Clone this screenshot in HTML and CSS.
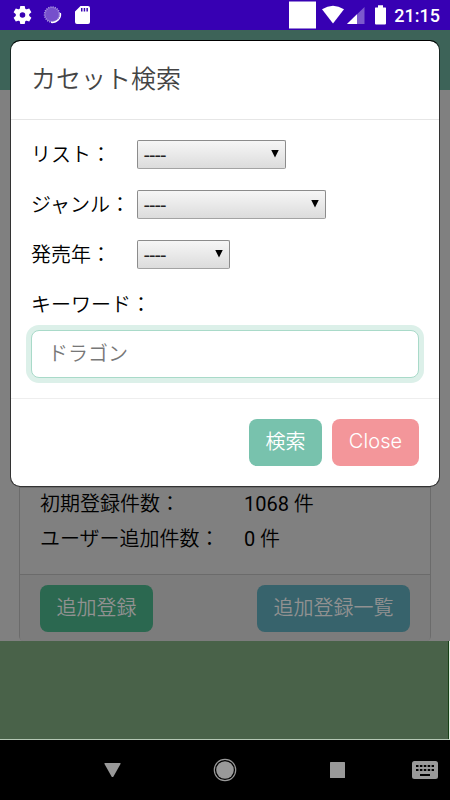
FILE: index.html
```html
<!DOCTYPE html>
<html lang="ja">
<head>
<meta charset="utf-8">
<title>カセット検索</title>
<link rel="stylesheet" href="styles.css">
</head>
<body>
<div class="screen">
  <header class="status">
    <svg class="status-icons" width="450" height="30" viewBox="0 0 450 30">
      <g fill="#fff">
        <circle cx="22.5" cy="15" r="4.8" fill="none" stroke="#fff" stroke-width="4"/>
        <path d="M20.3 6h4.4l.8 4h-6zM20.3 24h4.4l.8-4h-6zM13.6 12.2l2.2-3.8 4 1.4-3 5.2zM31.4 12.2l-2.2-3.8-4 1.4 3 5.2zM13.6 17.8l2.2 3.8 4-1.4-3-5.2zM31.4 17.8l-2.2 3.8-4-1.4 3-5.2z"/>
        <circle cx="52" cy="14.5" r="7.500" fill="#7650cc"/>
        <circle cx="52" cy="14.5" r="7.400" fill="none" stroke="#a995df" stroke-width="1.700" stroke-dasharray="1.200 1"/>
        <path d="M60.300 13a8 8 0 0 1-9.300 9.300" fill="none" stroke="#fff" stroke-width="1.500"/>
        <path fill-rule="evenodd" d="M80.500 6H88q2 0 2 2v14q0 2-2 2H77q-2 0-2-2V11.500zM81 8v3.500h1.500V8zM83.700 8v3.500h1.500V8zM86.400 8v3.500h1.500V8z"/>
        <path d="M289 1.500h27v27h-27z"/>
        <path d="M322 9.300Q333 2 344 9.300L333 23.500z"/>
        <path d="M347 24L364.500 7v17z" opacity=".35"/>
        <path d="M347 24L357 14.300V24z"/>
        <path d="M378 5.300h5V7.500h2.500q.5 0 .5.500v15.500q0 1-1 1h-9q-1 0-1-1V8q0-.5.500-.5h2.500z"/>
      </g>
    </svg>
    <time class="clock">21:15</time>
  </header>
  <main class="page">
    <div class="topbar"></div>
    <section class="card">
      <div class="card-head"></div>
      <div class="card-body">
        <div class="stat"><span>初期登録件数：</span><span><b class="num">1068</b> 件</span></div>
        <div class="stat"><span>ユーザー追加件数：</span><span><b class="num">0</b> 件</span></div>
      </div>
      <div class="card-foot">
        <button class="btn dim-green">追加登録</button>
        <button class="btn dim-blue">追加登録一覧</button>
      </div>
    </section>
    <div class="ad"></div>
  </main>
  <nav class="navbar">
    <svg width="450" height="60" viewBox="0 0 450 60" fill="#999">
      <path d="M105 23h15q1 0 .5 1l-7 12.500q-1 1.200-2 0l-7-12.500q-.5-1 .5-1z"/>
      <circle cx="225" cy="30" r="8.800"/>
      <circle cx="225" cy="30" r="10.700" fill="none" stroke="#999" stroke-width="1.200"/>
      <rect x="330" y="22" width="15" height="16" rx=".5"/>
      <path fill-rule="evenodd" d="M414.500 21h21q2.500 0 2.500 2.500v13q0 2.500-2.500 2.500h-21q-2.500 0-2.500-2.500v-13q0-2.500 2.500-2.500zM420 34v2h10v-2z"/>
      <path d="M416 26h18M416 30h18" stroke="#000" stroke-width="2.200" stroke-dasharray="2.500 1.400"/>
    </svg>
  </nav>
  <section class="modal">
    <h1 class="modal-head">カセット検索</h1>
    <div class="modal-body">
      <div class="field"><span class="label">リスト：</span><div class="select list"><span>----</span><i class="arrow"></i></div></div>
      <div class="field"><span class="label">ジャンル：</span><div class="select genre"><span>----</span><i class="arrow"></i></div></div>
      <div class="field"><span class="label">発売年：</span><div class="select year"><span>----</span><i class="arrow"></i></div></div>
      <div class="field keyword"><span class="label">キーワード：</span></div>
      <input class="search" type="text" placeholder="ドラゴン">
    </div>
    <div class="modal-foot">
      <button class="btn find">検索</button>
      <button class="btn close">Close</button>
    </div>
  </section>
</div>
</body>
</html>
```
FILE: styles.css
```css
* { box-sizing: border-box; }
body { margin: 0; }
.screen {
  position: relative;
  display: flex;
  flex-direction: column;
  width: 450px;
  height: 800px;
  overflow: hidden;
  font-family: Roboto, "Noto Sans CJK JP", sans-serif;
  font-size: 20px;
  font-weight: 350;
  color: #000;
}
.status { position: relative; height: 30px; background: #3700b3; }
.status-icons { display: block; }
.clock {
  position: absolute;
  right: 10px;
  top: 0;
  color: #fff;
  font-size: 18px;
  font-weight: 500;
  line-height: 32px;
}
.page { display: flex; flex-direction: column; height: 710px; background: #808080; }
.topbar { height: 60px; background: #3d6358; }
.card {
  display: flex;
  flex-direction: column;
  height: 551px;
  margin: 0 19px;
  border: 1px solid #6b6b6b;
  border-top: 0;
  border-bottom: 0;
  border-radius: 0 0 5px 5px;
}
.card-head { height: 398px; border-bottom: 1px solid #6b6b6b; }
.card-body { height: 86px; }
.stat { display: grid; grid-template-columns: 204px 1fr; padding-left: 20px; height: 35px; line-height: 33px; }
.num { font-weight: 400; }
.card-foot {
  display: flex;
  justify-content: space-between;
  flex: 1;
  padding: 10px 20px 9px;
  border-top: 1px solid #6b6b6b;
  border-radius: 0 0 4px 4px;
  background: #7c7c7c;
}
.btn {
  height: 47px;
  padding: 0 0 4px;
  border: 0;
  border-radius: 8px;
  font: inherit;
  color: #fff;
}
.dim-green { width: 113px; background: #2b6850; color: #919191; }
.dim-blue { width: 153px; background: #37636c; color: #919191; }
.ad { flex: 1; background: #496249; border-bottom: 1px solid #b5c8b5; border-right: 1px solid #e4eee4; box-shadow: inset -1px 0 #164016; }
.navbar { height: 60px; background: #000; }
.navbar svg { display: block; }
.modal {
  position: absolute;
  left: 10px;
  top: 40px;
  width: 430px;
  height: 447px;
  border: 1px solid rgba(0, 0, 0, .6);
  border-top-color: #000;
  border-radius: 10px;
  background: #fff;
  background-clip: padding-box;
}
.modal-head {
  height: 79px;
  margin: 0;
  padding: 2px 0 0 20px;
  border-bottom: 1px solid #e6e6e6;
  font-size: 25px;
  font-weight: 350;
  line-height: 73px;
  color: #444;
}
.modal-body { height: 278px; padding: 20px 20px 0; }
.field { display: flex; align-items: flex-start; height: 50px; }
.label { width: 106px; padding-top: 1px; line-height: 28px; white-space: nowrap; }
.keyword { height: 40px; }
.keyword .label { width: auto; }
.select {
  display: flex;
  align-items: center;
  justify-content: space-between;
  height: 29px;
  padding: 0 6px 0 6px;
  border: 1px solid #8c8c8c;
  border-bottom-color: #a3a3a3;
  border-radius: 2px;
  background: linear-gradient(#f6f6f6, #dcdcdc);
  font-size: 20px;
  font-weight: 400;
  line-height: 26px;
}
.select span { margin-top: 1px; color: #222; }
.list { width: 149px; }
.genre { width: 189px; }
.year { width: 93px; }
.arrow { width: 8px; height: 8px; margin-top: -2px; background: #000; clip-path: polygon(0 0, 100% 0, 50% 100%); }
.search {
  display: block;
  width: 388px;
  height: 48px;
  padding: 0 16px 1px;
  border: 1px solid #a9dac9;
  border-radius: 8px;
  box-shadow: 0 0 0 5px #dcf0e9;
  font: inherit;
  outline: 0;
}
.search::placeholder { color: #777; opacity: 1; }
.modal-foot {
  display: flex;
  justify-content: flex-end;
  gap: 10px;
  padding: 20px 20px 0;
  border-top: 1px solid #eee;
}
.find { width: 73px; background: #78c2ad; }
.close { width: 87px; background: #f3969a; font-family: Inter, sans-serif; font-size: 20px; font-weight: 350; letter-spacing: .1px; }
```
